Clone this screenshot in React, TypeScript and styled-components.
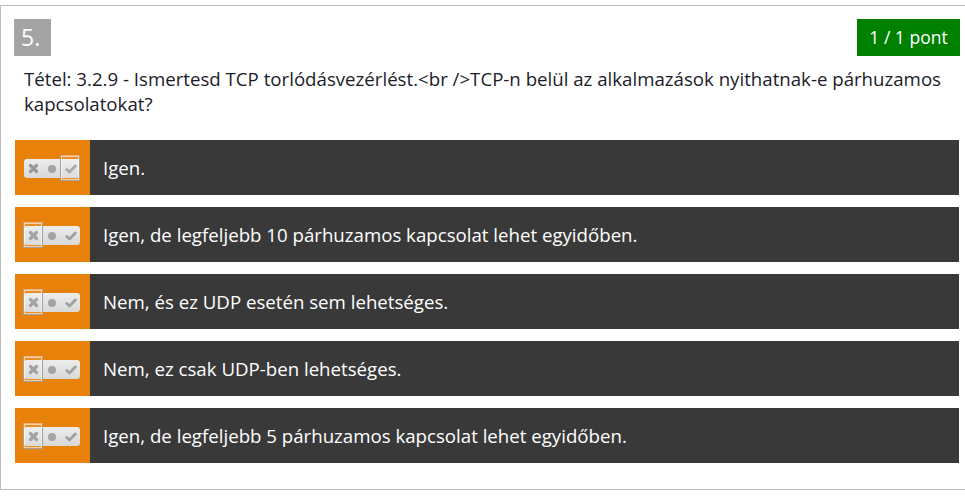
import React from "react";
import styled, { createGlobalStyle } from "styled-components";

const Global = createGlobalStyle`
  html, body { margin: 0; padding: 0; background: #fff; overflow: hidden; }
  body { font-family: "Open Sans", "Noto Sans", sans-serif; }
`;

const Page = styled.div`
  padding-top: 5px;
  width: 980px;
`;

const Card = styled.div`
  border: 1px solid #bdbdbd;
  width: 975px;
  height: 485px;
  box-sizing: border-box;
  padding: 13px 14px 0 13px;
`;

const Header = styled.div`
  display: flex;
  justify-content: space-between;
  align-items: flex-start;
  width: 946px;
`;

const NumberBadge = styled.div`
  background: #a4a4a4;
  color: #fff;
  width: 37px;
  height: 37px;
  font-size: 23px;
  line-height: 37px;
  padding-left: 7px;
  box-sizing: border-box;
`;

const PointBadge = styled.div`
  background: #008000;
  color: #fff;
  height: 37px;
  width: 103px;
  box-sizing: border-box;
  text-align: center;
  font-size: 17.5px;
  line-height: 37px;
`;

const Question = styled.div`
  color: #1c1c2a;
  font-size: 18.67px;
  line-height: 25px;
  padding: 10px 0 0 10px;
  width: 935px;
`;

const Answers = styled.div`
  display: flex;
  flex-direction: column;
  gap: 12px;
  margin-top: 24px;
  width: 944px;
  margin-left: 1px;
`;

const Row = styled.div`
  display: flex;
  height: 55px;
  background: #393939;
`;

const Marker = styled.div`
  background: #e8810a;
  width: 75px;
  display: flex;
  align-items: center;
  padding-left: 9px;
  box-sizing: border-box;
`;

const Toggle = styled.div`
  width: 56px;
  height: 19px;
  background: linear-gradient(#ededed, #d8d8d8);
  border-radius: 3px;
  display: flex;
  align-items: center;
  justify-content: space-around;
  margin-top: 2px;
`;

const Slot = styled.span<{ $sel?: boolean }>`
  position: relative;
  width: 19px;
  height: 19px;
  display: flex;
  align-items: center;
  justify-content: center;
  &::after {
    content: "";
    display: ${(p) => (p.$sel ? "block" : "none")};
    position: absolute;
    left: -1px;
    top: -4px;
    width: 18px;
    height: 24px;
    border: 1.5px solid #a0a0a0;
    border-top-color: #f0b080;
    box-shadow: inset 0 0 0 1px rgba(255, 255, 255, 0.6);
    background: rgba(255, 255, 255, 0.1);
  }
`;

const Label = styled.div`
  color: #fff;
  font-size: 18.67px;
  display: flex;
  align-items: center;
  padding-left: 13px;
`;

const Cross = () => (
  <svg width="11" height="11" viewBox="0 0 11 11">
    <path d="M2.5 2.5 L8.5 8.5 M8.5 2.5 L2.5 8.5" stroke="#999" strokeWidth="3.2" strokeLinecap="round" />
  </svg>
);
const Dot = () => (
  <svg width="10" height="10" viewBox="0 0 10 10">
    <circle cx="5" cy="5" r="4" fill="#a4a4a4" />
  </svg>
);
const Check = () => (
  <svg width="12" height="10" viewBox="0 0 12 10">
    <path d="M1.8 5.5 L4.5 8 L10.3 2" stroke="#a0a0a0" strokeWidth="2.8" fill="none" strokeLinecap="round" strokeLinejoin="round" />
  </svg>
);

const answers: { text: string; sel: "x" | "c" }[] = [
  { text: "Igen.", sel: "c" },
  { text: "Igen, de legfeljebb 10 párhuzamos kapcsolat lehet egyidőben.", sel: "x" },
  { text: "Nem, és ez UDP esetén sem lehetséges.", sel: "x" },
  { text: "Nem, ez csak UDP-ben lehetséges.", sel: "x" },
  { text: "Igen, de legfeljebb 5 párhuzamos kapcsolat lehet egyidőben.", sel: "x" },
];

export default function App() {
  return (
    <>
      <Global />
      <Page>
        <Card>
          <Header>
            <NumberBadge>5.</NumberBadge>
            <PointBadge>1 / 1 pont</PointBadge>
          </Header>
          <Question>
            Tétel: 3.2.9 - Ismertesd TCP torlódásvezérlést.&lt;br /&gt;TCP-n belül az alkalmazások nyithatnak-e párhuzamos kapcsolatokat?
          </Question>
          <Answers>
            {answers.map((a, i) => (
              <Row key={i}>
                <Marker>
                  <Toggle>
                    <Slot $sel={a.sel === "x"}><Cross /></Slot>
                    <Slot><Dot /></Slot>
                    <Slot $sel={a.sel === "c"}><Check /></Slot>
                  </Toggle>
                </Marker>
                <Label>{a.text}</Label>
              </Row>
            ))}
          </Answers>
        </Card>
      </Page>
    </>
  );
}
